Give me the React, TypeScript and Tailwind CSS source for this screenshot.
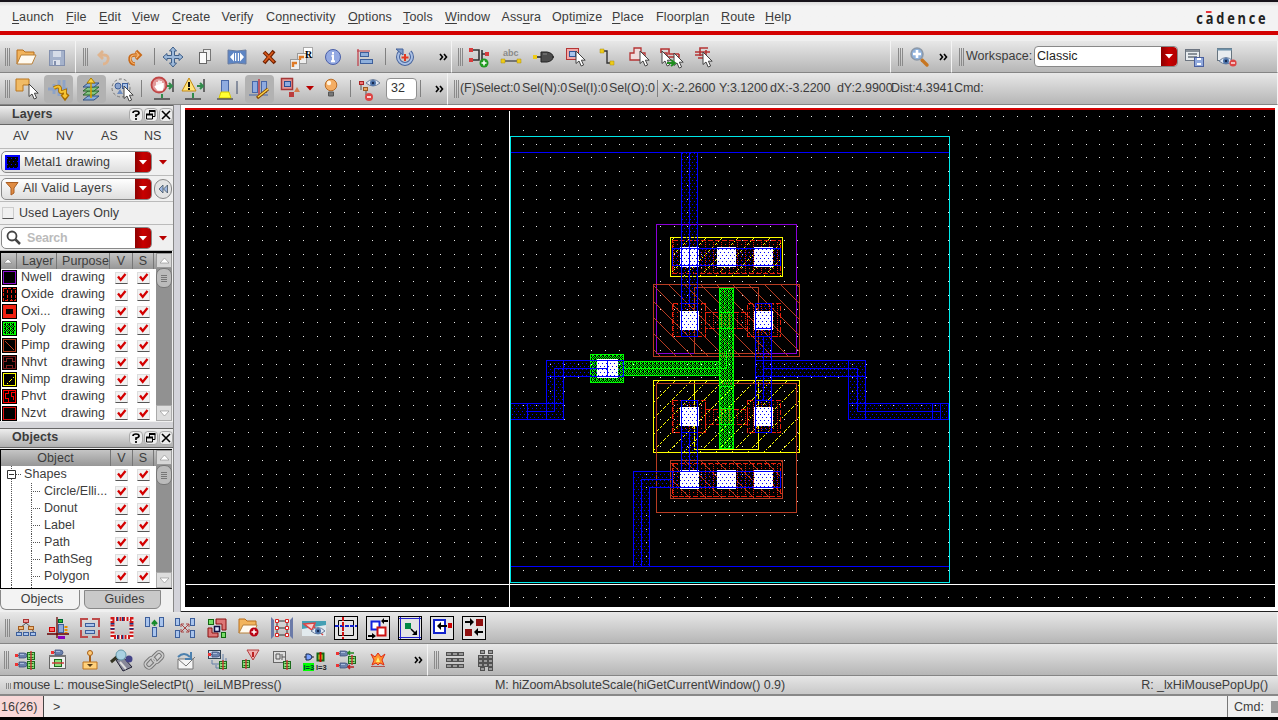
import React from "react";

type Kids = { children?: React.ReactNode };

const bar = "flex items-center bg-gradient-to-b from-[#e8e8e8] to-[#b6b6b6] border-b border-[#858585] border-r border-r-[#f4f4f4] shrink-0";

function Ic({ w = "w-8", on = false, children }: Kids & { w?: string; on?: boolean }) {
  return (
    <div className={`${w} shrink-0 flex items-center justify-center`}>
      <div className={on ? "w-[29px] h-[28px] rounded-[4px] bg-[#b2b2b2] flex items-center justify-center" : "flex"}>
        <svg width="28" height="28" viewBox="-14 -14 28 28" className="overflow-visible">{children}</svg>
      </div>
    </div>
  );
}

function Grip({ w = "w-[9px]", h = "h-[18px]" }: { w?: string; h?: string }) {
  return (
    <div className={`${w} flex justify-end shrink-0`}>
      <div className={`${h} w-[5px] border-l border-r border-[#8a8a8a] flex justify-center`}>
        <div className="w-px bg-[#8a8a8a]" />
      </div>
    </div>
  );
}

function Sep({ w = "w-[6px]" }: { w?: string }) {
  return (
    <div className={`${w} flex justify-center shrink-0`}>
      <div className="w-px h-[17px] bg-[#808080]" />
    </div>
  );
}

function More({ w }: { w: string }) {
  return (
    <div className={`${w} flex justify-center shrink-0`}>
      <svg width="9" height="8" viewBox="0 0 9 8" fill="none" stroke="#000" strokeWidth="1.6" className="shrink-0">
        <path d="M1 1l2.5 3L1 7M5 1l2.5 3L5 7" />
      </svg>
    </div>
  );
}

const Cursor = ({ x = 0, y = 0 }: { x?: number; y?: number }) => (
  <path transform={`translate(${x} ${y})`} d="M0 0V12.5L3 10L5.2 15L7.6 14L5.4 9.2H9.2Z" fill="#fff" stroke="#444" strokeWidth="1" />
);
const Box = ({ x, y, w, h, f = "#a9c4ec", s = "#3d5f9b", sw = 1 }: { x: number; y: number; w: number; h: number; f?: string; s?: string; sw?: number }) => (
  <rect x={x + 0.5} y={y + 0.5} width={w - 1} height={h - 1} fill={f} stroke={s} strokeWidth={sw} />
);
const Transistor = ({ x, y }: { x: number; y: number }) => (
  <g transform={`translate(${x} ${y})`}>
    <Box x={0} y={0} w={8} h={8} f="#8be07b" s="#1c6b1c" />
    <path d="M1.500 2.500h5M1.500 5.500h5" stroke="#1c6b1c" />
    <path d="M4-1V9" stroke="#c33" strokeWidth="1.4" />
  </g>
);
const Gate = ({ x, y }: { x: number; y: number }) => (
  <g transform={`translate(${x} ${y})`}>
    <path d="M-2 2.500H2" stroke="#555" />
    <path d="M1 0H6Q9 0 9 2.500T6 5H1Z" fill="#6c82ad" stroke="#40527d" strokeWidth=".8" />
    <path d="M2 1.500H6" stroke="#a9bbdc" />
    <rect x="-3" y="1" width="3" height="3" fill="#e33" />
  </g>
);
const Magnifier = ({ plus = false }: { plus?: boolean }) => (
  <g>
    <path d="M3 3L8 8" stroke="#c77622" strokeWidth="3.4" strokeLinecap="round" />
    <circle cx="-2" cy="-3" r="6" fill="#8fb2dc" stroke="#8d99a8" strokeWidth="1.6" />
    {plus && <path d="M-2-7V1M-6-3H2" stroke="#fff" strokeWidth="2.6" />}
  </g>
);
const Eye = ({ x = 0, y = 0 }: { x?: number; y?: number }) => (
  <g transform={`translate(${x} ${y})`}>
    <path d="M-7 0Q0-7 7 0Q0 6 -7 0Z" fill="#dfe7f2" stroke="#6c7f9c" />
    <circle r="3" fill="#4d73aa" />
    <circle r="1.2" fill="#14264d" />
  </g>
);

const menus: [string, number][] = [
  ["Launch", 0], ["File", 0], ["Edit", 0], ["View", 0], ["Create", 0], ["Verify", 3], ["Connectivity", 2], ["Options", 0], ["Tools", 0],
  ["Window", 0], ["Assura", 3], ["Optimize", 4], ["Place", 0], ["Floorplan", 7], ["Route", 0], ["Help", 0],
];
const menuW = [
  "w-[54px]", "w-[33px]", "w-[33px]", "w-[40px]", "w-[49.5px]", "w-[44.5px]", "w-[82px]", "w-[55px]", "w-[42px]",
  "w-[56.5px]", "w-[50.5px]", "w-[60px]", "w-[44px]", "w-[65px]", "w-[44px]", "w-[40px]",
];

function MenuBar() {
  return (
    <div className="h-[35px] shrink-0 border-t-2 border-[#17131a] bg-[#f2f2f2] flex flex-col">
      <div className="flex-1 flex items-center pt-px pl-3 pr-[12px] tracking-[0.12px] bg-gradient-to-b from-[#dcdcdc] via-[#f3f3f3] via-15% to-[#f3f3f3]">
        {menus.map(([m, u], i) => (
          <div key={m} className={`${menuW[i]} shrink-0`}>
            {m.slice(0, u)}<span className="underline underline-offset-2">{m[u]}</span>{m.slice(u + 1)}
          </div>
        ))}
        <div className="ml-auto flex flex-col items-end mt-[2px] font-['Open_Sans','Noto_Sans',sans-serif] font-bold text-[16px] leading-4 text-[#222]">
          <div className="flex origin-right scale-x-[0.8] tracking-[3.5px]">
            <span>c</span>
            <span className="relative">a<i className="absolute left-0 top-[1px] w-[7px] h-[2px] bg-[#e8323c]" /></span>
            <span className="-mr-[3.5px]">dence</span>
          </div>
        </div>
      </div>
      <div className="h-1 bg-[#d30000]" />
    </div>
  );
}

function RedArrow({ h = "h-full" }: { h?: string }) {
  return (
    <div className={`w-4 ${h} bg-gradient-to-r from-[#8d0000] via-[#c80000] to-[#b00000] flex items-center justify-center rounded-r-[4px]`}>
      <svg width="8" height="5"><path d="M0 0H8L4 4.5Z" fill="#fff" /></svg>
    </div>
  );
}

function TopBars() {
  return (
    <div className="shrink-0 pt-[6px] bg-[#efefef] flex flex-col">
      <div className="flex h-8">
        <div className={`${bar} w-[76px]`}>
          <Grip w="w-[10px]" />
          <Ic w="w-[31px]">
            <path d="M-9 7V-7h6l2 2h9v4" fill="#f2b45c" stroke="#b86e1c" />
            <path d="M-9 7L-5-2H10L6 7Z" fill="#fffaf0" stroke="#b9813a" />
          </Ic>
          <Ic>
            <Box x={-8} y={-7} w={16} h={16} f="#a5b2cb" s="#8390ae" />
            <rect x="-4" y="-6" width="8" height="6" fill="#d6dce8" /><rect x="-4" y="3" width="7" height="5" fill="#dce1eb" /><rect x="-3" y="4" width="2" height="4" fill="#8390ae" />
          </Ic>
        </div>
        <div className={`${bar} w-[376px]`}>
          <Grip w="w-[12px]" />
          <Ic w="w-[31px]"><path d="M-5-2H0Q5-2 4 3Q3 7-1 7M-1-6L-5-2L-1 2" fill="none" stroke="#dfb48e" strokeWidth="2.8" /></Ic>
          <Ic><path d="M5-2H0Q-6-2-5 3Q-4 7 0 7M1-6L5-2L1 2" fill="none" stroke="#c96a1a" strokeWidth="3.400" /><path d="M4-2H0Q-5-2-4.500 3Q-4 6 0 7M1-5L4-2L1 1" fill="none" stroke="#f6b673" strokeWidth="1.200" /></Ic>
          <Sep />
          <Ic><path d="M0-10l3.500 4H1.500v4.500H6V-3.500L10 0L6 3.500V1.500H1.500V6H3.500L0 10L-3.500 6H-1.500V1.500H-6V3.500L-10 0L-6-3.500V-1.500H-1.500V-6H-3.500Z" fill="#9db9da" stroke="#3f5f88" /></Ic>
          <Ic><Box x={-2} y={-8} w={8} h={12} f="#eee" s="#777" /><Box x={-6} y={-5} w={8} h={12} f="#fafafa" s="#666" /></Ic>
          <Ic><path d="M-9-7Q0-5 9-7V7Q0 5-9 7Z" fill="#5d85c4" stroke="#6a7da0" /><path d="M-3-4.500L-7 0L-3 4.500ZM3-4.500L7 0L3 4.500Z" fill="#fff" /><rect x="-2" y="-4" width="1.200" height="8" fill="#fff" /><rect x=".8" y="-4" width="1.200" height="8" fill="#fff" /></Ic>
          <Ic><path d="M-5-5L6 6M5-6L-5 6" stroke="#722200" strokeWidth="3.800" /><path d="M-4.500-4.500L5 5M4-5L-4.500 5" stroke="#dc5a1c" strokeWidth="1.600" /></Ic>
          <Ic>
            <Box x={2} y={-10} w={10} h={11} f="#fff" s="#aaa" /><Box x={-4} y={-4} w={10} h={11} f="#eee" s="#999" /><Box x={-11} y={2} w={10} h={11} f="#eee" s="#999" />
            <path d="M-8 10V6H-4M-1 3V0H3" stroke="#df7a26" strokeWidth="2.400" fill="none" />
            <text x="4" y="1" fontSize="10" fontWeight="bold" fill="#000" fontFamily="Liberation Serif" letterSpacing="0">R</text>
          </Ic>
          <Ic><circle r="7.500" fill="#93a9e2" stroke="#4a5fa8" /><path d="M0-5V-2.500M-1.500-1H0V4M-2 4.300H2" stroke="#fff" strokeWidth="2" fill="none" /></Ic>
          <Ic><path d="M-7-8V9M-8-6H5" stroke="#c03a45" strokeWidth="1.200" /><Box x={-5} y={-5} w={9} h={5} f="#8fb0dc" /><Box x={-5} y={2} w={13} h={5} f="#8fb0dc" /></Ic>
          <Sep w="w-[8px]" />
          <Ic><path d="M-5-5A7 7 0 1 0 5-5" fill="none" stroke="#45629b" strokeWidth="4" /><path d="M-5-5A7 7 0 1 0 5-5" fill="none" stroke="#a9bfe4" strokeWidth="2" /><path d="M-9-8H-2V-2Z" fill="#7f9cca" stroke="#45629b" /><path d="M0-3V4M-3.500 .5H3.500" stroke="#e33a22" strokeWidth="2" /></Ic>
          <More w="w-[44px]" />
        </div>
        <div className={`${bar} w-[439px]`}>
          <Grip w="w-[11px]" />
          <Ic>
            <path d="M-6-7H0V3H-6M3-7V3M3-3H9" stroke="#333" strokeWidth="1.600" fill="none" />
            <path d="M-10-9h4v4h-4ZM-10 1h4v4h-4ZM6-5h4v4H6Z" fill="#d83c3c" /><circle cx="5" cy="6" r="4.500" fill="#1f9a1f" /><path d="M5 3.500V8.500M2.500 6H7.500" stroke="#fff" strokeWidth="1.500" />
          </Ic>
          <Ic><text x="-8" y="-1" fontSize="9" fontWeight="bold" fill="#8a8a8a" letterSpacing="0">abc</text><path d="M-8 4H8" stroke="#222" /><path d="M-10 2h4v4h-4ZM6 2h4v4H6Z" fill="#eecb18" stroke="#a98e12" strokeWidth=".5" /></Ic>
          <Ic><path d="M-9 0H0M8 0H11" stroke="#222" strokeWidth="1.400" /><path d="M-2-5H4Q10-4 10 0T4 5H-2Z" fill="#4c4c4c" stroke="#222" /><path d="M0-3H4" stroke="#888" /><rect x="-10" y="-2" width="4" height="4" fill="#eecb18" /></Ic>
          <Ic><Box x={-9} y={-9} w={13} h={12} f="#f0a9a9" s="#b53434" /><Box x={-6} y={-6} w={7} h={6} f="#a9c4ec" s="#31579a" /><Cursor x={1} y={-6} /></Ic>
          <Ic><path d="M-4-6H0V6H5" stroke="#333" strokeWidth="1.400" fill="none" /><path d="M-7-8h4v4h-4ZM3 4h4v4H3Z" fill="#eecb18" stroke="#a98e12" strokeWidth=".5" /></Ic>
          <Ic><path d="M-9 3V-4H-5V-9H2V-4H6V3Z" fill="#efdddd" stroke="#b53434" strokeWidth="1.300" /><Cursor x={1} y={-6} /></Ic>
          <Ic><path d="M-10-4V-8H-2V-3H8M-8-4H-4V0H8V-3" stroke="#b53434" strokeWidth="1.600" fill="none" /><Cursor x={-9} y={-6} /><Cursor x={3} y={-4} /><path d="M-4 6H3M0 3L4 6L0 9" stroke="#1e8d1e" strokeWidth="2" fill="none" /></Ic>
          <Ic><path d="M-8-5H-3V-9H5M-3-1V-5H7M-8-2H3V-7M-5 1H5" stroke="#b53434" strokeWidth="1.600" fill="none" /><Cursor x={0} y={-5} /></Ic>
        </div>
        <div className={`${bar} w-[61px]`}>
          <Grip w="w-[12px]" /><Ic><Magnifier plus /></Ic><More w="w-[17px]" />
        </div>
        <div className={`${bar} flex-1`}>
          <Grip w="w-[12px]" />
          <span className="pl-[2px] w-[70px] whitespace-nowrap">Workspace:</span>
          <div className="w-[144px] h-[21px] rounded-[4px] border border-[#888] bg-white flex items-center pl-[2px] text-[#222]">
            <span className="flex-1">Classic</span><RedArrow />
          </div>
          <Ic><Box x={-9} y={-8} w={15} h={12} f="#e8ecef" s="#6c7480" /><path d="M-9-6H6M-6-3H3M-6 0H3" stroke="#68717c" strokeWidth="1.300" /><Box x={0} y={0} w={10} h={10} f="#91a9dc" s="#4a5f9d" /><path d="M3 2H7M3 7H7" stroke="#fff" strokeWidth="2" /></Ic>
          <Ic><Box x={-9} y={-9} w={15} h={13} f="#e8ecef" s="#66737e" /><path d="M-9-7.500H6" stroke="#6d91a9" strokeWidth="2" /><Eye x={0} y={4} /><circle cx="7" cy="6" r="3.600" fill="#dc4545" /><path d="M5 6H9" stroke="#fff" strokeWidth="1.300" /></Ic>
        </div>
      </div>
      <div className="flex h-8">
        <div className={`${bar} w-[448px]`}>
          <Grip w="w-[10px]" />
          <Ic w="w-[31px]"><path d="M-10-10H3V-4H-3V2H-10Z" fill="#f0bb66" stroke="#b97620" /><Cursor x={3} y={-5} /></Ic>
          <Ic w="w-[34px]" on><path d="M-10 0H10M-4-5V5M1-9V7M6-9V4" stroke="#8da3c8" strokeWidth="3" /><path d="M-4-1Q3-5 2 2Q2 4 7 2V7M4 5L7 9L10 5" fill="none" stroke="#a76c00" strokeWidth="3.800" /><path d="M-4-1Q3-5 2 2Q2 4 7 2V7M5 6L7 8L9 6" fill="none" stroke="#f6c332" strokeWidth="2" /></Ic>
          <Ic on>
            <path d="M-8 11L-3 7H8L3 11Z" fill="#86abd9" stroke="#325383" /><path d="M-8 6L-3 2H8L3 6Z" fill="#83c583" stroke="#29652d" /><path d="M-8 2L-3-2H8L3 2Z" fill="#83c583" stroke="#29652d" /><path d="M-8-2L-3-6H8L3-2Z" fill="#86abd9" stroke="#325383" />
            <path d="M0 9V-7" stroke="#d8a100" strokeWidth="1.600" /><path d="M-4-6L0-11L4-6Z" fill="#ffd43d" stroke="#a77a00" />
          </Ic>
          <Ic w="w-[30px]"><circle cx="-1" cy="-1" r="9" fill="none" stroke="#777" strokeDasharray="3 2" /><circle cx="-4" cy="-3" r="3" fill="#8ba4cf" stroke="#405f95" /><Box x={0} y={-6} w={6} h={6} /><path d="M-5 5L-2 0L1 5Z" fill="#6d8cc0" /><Cursor x={2} y={-3} /></Ic>
          <Sep w="w-[9px]" />
          <Ic w="w-[31px]"><circle cx="-3" cy="-4" r="7.500" fill="#e29a9a" stroke="#c04646" strokeWidth="1.800" /><path d="M-7-3L-4 1H0L1-2V-6M-5 0V-7M-3 0V-8.500M-1 0V-8" stroke="#fff" strokeWidth="1.600" fill="#fff" /><path d="M11-10V3M-8 10H8" stroke="#444" strokeWidth="1.500" /><path d="M5-3H9M7-6L10-3L7 0M0 9V5" stroke="#318b4b" strokeWidth="2" fill="none" /></Ic>
          <Ic><path d="M-11 2L-4-11L3 2Z" fill="#ffe47a" stroke="#c58a14" /><path d="M-4-7V-2M-4-1V1" stroke="#111" strokeWidth="2" /><path d="M11-10V3M-8 10H8" stroke="#444" strokeWidth="1.500" /><path d="M4-3H9M7-6L10-3L7 0M0 9V4" stroke="#318b4b" strokeWidth="2" fill="none" /></Ic>
          <Ic w="w-[33px]"><Box x={-5} y={-9} w={8} h={13} f="#8eabe0" s="#4767a7" /><path d="M-5 3H3L5 9H-7Z" fill="#ff3" stroke="#d8ca00" /><path d="M-9 10H7" stroke="#222" /><path d="M11-8V5" stroke="#3b4868" /></Ic>
          <Ic w="w-[34px]" on><Box x={-7} y={-8} w={6} h={12} f="#8eabe0" s="#4767a7" /><Box x={2} y={-8} w={6} h={12} f="#8eabe0" s="#4767a7" /><path d="M-10 6H9" stroke="#4767a7" /><path d="M0-10V8" stroke="#bd3b4a" strokeWidth="1.500" /><path d="M9 0L-2 9" stroke="#8a4d00" strokeWidth="3.200" /><path d="M9 0L-1 8" stroke="#ffd84a" strokeWidth="1.500" /></Ic>
          <Ic w="w-[28px]"><Box x={-9} y={-11} w={12} h={12} f="#e39b9b" s="#a43737" sw={1.5} /><Box x={-6} y={-8} w={7} h={6} f="#8eabe0" s="#274e92" /><path d="M-1 3H4V8H-1Z" fill="#bb3c3c" /><path d="M4 3L7-2L10 3Z" fill="#d37b49" /></Ic>
          <div className="w-[11px] flex justify-center shrink-0"><svg width="8" height="5"><path d="M0 0H8L4 4.500Z" fill="#b80000" /></svg></div>
          <Ic><circle cx="0" cy="-4" r="5.800" fill="#f4ad63" stroke="#b96c26" /><circle cx="-2" cy="-6" r="2.200" fill="#fff1dc" /><path d="M-2.500 3H2.500V7H-2.500Z" fill="#777" stroke="#555" /></Ic>
          <Sep />
          <Ic><Box x={-10} y={-8} w={5} h={4} f="#e77" s="#a22" /><Box x={-6} y={-2} w={5} h={4} f="#eca35e" s="#9b5c22" /><path d="M-8-4V1M-3 2V6H0" stroke="#555" fill="none" /><Eye x={4} y={-6} /><circle cx="0" cy="8" r="4" fill="#dc4545" /><path d="M-2 8H2" stroke="#fff" strokeWidth="1.500" /></Ic>
          <div className="w-[31px] h-[22px] ml-px shrink-0 rounded-[4px] border border-[#909090] bg-white pl-1 flex items-center text-[#333]">32</div>
          <Sep /><More w="w-[24px] pl-[8px]" />
        </div>
        <div className={`${bar} flex-1 whitespace-nowrap tracking-[-0.08px]`}>
          <Grip w="w-[11px]" />
          <span className="w-[63px] pl-px">(F)Select:0</span><span className="w-[46px]">Sel(N):0</span><span className="w-[41px]">Sel(I):0</span><span className="w-[46px]">Sel(O):0</span>
          <Sep w="w-[4px]" />
          <span className="w-[60px] pl-[3px]">X:-2.2600</span><span className="w-[51px]">Y:3.1200</span><span className="w-[67px]">dX:-3.2200</span><span className="w-[54px]">dY:2.9900</span><span className="w-[63px]">Dist:4.3941</span><span>Cmd:</span>
        </div>
      </div>
    </div>
  );
}

function PanelHead({ title }: { title: string }) {
  const b = "w-[14px] h-[14px] rounded-[4px] border border-[#a9a9a9] bg-[#ececec] flex items-center justify-center";
  return (
    <div className="h-5 flex items-center shrink-0 pl-3 gap-[1px] pb-px border-y border-[#666] bg-gradient-to-b from-[#eee] to-[#b0b0b0]">
      <span className="font-bold flex-1">{title}</span>
      <div className={b}><svg width="8" height="10" fill="none" stroke="#000" strokeWidth="1.700"><path d="M1 3Q1 1 4 1T7 3Q7 4.500 4 5V7M4 8V10" /></svg></div>
      <div className={b}><svg width="10" height="10" fill="none" stroke="#000"><path d="M3.500 4V1.500H9V6.500H7M.500 4.500H6.500V9H.500Z" /><path d="M3 1H9.500M0 4.500H7" strokeWidth="2" /></svg></div>
      <div className={b}><svg width="10" height="10" stroke="#000" strokeWidth="1.600"><path d="M1 1L9 9M9 1L1 9" /></svg></div>
    </div>
  );
}

const Check = () => (
  <div className="w-[13px] h-[12px] bg-[#f2f2f2] border border-[#ddd] border-b-[#555] flex items-center justify-center">
    <svg width="10" height="9"><path d="M1 3.500L3.700 7L8.500 1" stroke="#d40000" strokeWidth="2.300" fill="none" /></svg>
  </div>
);

function Scroll() {
  return (
    <div className="w-4 shrink-0 bg-[#919191] flex flex-col items-center justify-between">
      <div className="w-4">
        <div className="h-[15px] bg-[#d6d6d6] border border-[#999] flex items-center justify-center"><svg width="9" height="7"><path d="M0 6L4.500 1L9 6Z" fill="#fff" stroke="#888" strokeWidth=".6" /></svg></div>
        <div className="h-[20px] rounded-[7px] border border-[#777] bg-[#bbb] flex flex-col items-center justify-center gap-px">
          <i className="w-[6px] h-px bg-[#777]" /><i className="w-[6px] h-px bg-[#777]" /><i className="w-[6px] h-px bg-[#777]" /><i className="w-[6px] h-px bg-[#777]" />
        </div>
      </div>
      <div className="h-4 w-4 bg-[#ddd] border border-[#aaa] flex items-center justify-center"><svg width="9" height="7"><path d="M0 1L4.500 6L9 1Z" fill="#fff" stroke="#888" strokeWidth=".6" /></svg></div>
    </div>
  );
}

const layers: [string, React.ReactNode][] = [
  ["Nwell", <rect x="1.500" y="1.500" width="12" height="12" stroke="#8a10d0" />],
  ["Oxide", <path d="M1.500 1.500H13.500V13.500H1.500ZM5.500 3V13M9.500 3V13" stroke="#f02010" strokeDasharray="3 1.500" />],
  ["Oxi...", <g><rect x="1" y="1" width="13" height="13" fill="#f02010" /><path d="M4 5H11V10H4Z" fill="#000" /></g>],
  ["Poly", <rect transform="translate(.5 .5)" x="1" y="1" width="12" height="12" fill="url(#poly)" stroke="#0f0" />],
  ["Pimp", <path d="M1.500 1.500H13.500V13.500H1.500ZM3 3L12 12" stroke="#b84020" />],
  ["Nhvt", <path d="M1.500 1.500H13.500V13.500H1.500ZM1 6.500H4.500V3.500H10.500V6.500H13M4.500 13V10.500H10.500V13" stroke="#802020" />],
  ["Nimp", <g><rect x="1.500" y="1.500" width="12" height="12" stroke="#ff0" /><path d="M5 11h1v1h-1zM7 9h1v1h-1zM9 7h1v1h-1zM11 5h1v1h-1zM8 8h1v1h-1z" fill="#ff0" /></g>],
  ["Phvt", <path d="M1.500 1.500H13.500V13.500H1.500ZM6.500 1V4.500H3.500V9.500H6.500V13M9.500 3.500H13M9.500 3V7.500H11.500V11" stroke="#f00" />],
  ["Nzvt", <rect x="1.500" y="1.500" width="12" height="12" stroke="#e01010" />],
];

const th = "h-full flex items-center border-r border-[#777] shrink-0";

function Side() {
  return (
    <div className="w-[174px] shrink-0 flex flex-col bg-[#f0f0f0] border-r border-[#888] overflow-hidden">
      <PanelHead title="Layers" />
      <div className="h-6 flex items-center pl-[13px] border-b border-[#bbb] shrink-0">
        <span className="w-[43px]">AV</span><span className="w-[45px]">NV</span><span className="w-[43px]">AS</span><span>NS</span>
      </div>
      <div className="h-[27px] flex items-center pl-px border-b border-[#bbb] shrink-0">
        <div className="w-[151px] h-[22px] rounded-[5px] border border-[#888] bg-gradient-to-b from-white to-[#dedede] flex items-center pl-[3px] tracking-[0.1px]">
          <svg width="15" height="15" className="mr-[4px]" shapeRendering="crispEdges"><rect width="15" height="15" fill="#000" /><rect transform="translate(.5 .5)" x=".5" y=".5" width="13" height="13" fill="url(#metal)" stroke="#00f" strokeWidth="2" /></svg>
          <span className="flex-1 whitespace-nowrap">Metal1 drawing</span><RedArrow />
        </div>
        <svg width="8" height="5" className="ml-[7px]"><path d="M0 0H8L4 4.500Z" fill="#b80000" /></svg>
      </div>
      <div className="h-[26px] flex items-center pl-px border-b border-[#bbb] shrink-0">
        <div className="w-[151px] h-[22px] rounded-[5px] border border-[#888] bg-gradient-to-b from-white to-[#dedede] flex items-center pl-[3px] tracking-[0.25px]">
          <svg width="15" height="15" className="mr-[3px]"><path d="M1 1.500H13L9 7V12L6 14V7Z" fill="#df8b42" stroke="#a95d22" /></svg>
          <span className="flex-1 whitespace-nowrap">All Valid Layers</span><RedArrow />
        </div>
        <div className="ml-[2px] w-[18px] h-5 rounded-full border border-[#888] bg-[#e4e4e4] flex items-center justify-center"><svg width="10" height="10"><path d="M5 1V9L1 5ZM9.500 1V9L5.500 5Z" fill="#9fb6df" stroke="#456" strokeWidth=".8" /></svg></div>
      </div>
      <div className="h-[23px] flex items-center pl-[2px] border-b border-[#bbb] shrink-0">
        <div className="w-3 h-3 bg-[#f0f0f0] border border-[#ccc] border-b-[#555] mr-[5px]" /><span>Used Layers Only</span>
      </div>
      <div className="h-[26px] flex items-center pt-px pl-px border-b border-[#bbb] shrink-0">
        <div className="w-[151px] h-[22px] rounded-[5px] border border-[#888] bg-white flex items-center pl-[4px]">
          <svg width="16" height="16" className="mr-[5px]"><circle cx="6" cy="6" r="4.500" fill="none" stroke="#444" strokeWidth="1.800" /><path d="M9.500 9.500L14 14" stroke="#444" strokeWidth="2.500" /></svg>
          <span className="flex-1 text-[#bbb] font-bold tracking-[-0.2px]">Search</span><RedArrow />
        </div>
        <svg width="8" height="5" className="ml-[7px]"><path d="M0 0H8L4 4.500Z" fill="#b80000" /></svg>
      </div>
      <div className="h-[170px] mr-px shrink-0 border-t-2 border-l border-black flex bg-white">
        <div className="flex-1 overflow-hidden">
          <div className="h-4 bg-gradient-to-b from-[#c5c5c5] to-[#979797] flex items-center">
            <div className={`${th} w-4 justify-center`}><svg width="9" height="6"><path d="M0 5L4 1L8 5Z" fill="#fff" stroke="#777" strokeWidth=".5" /></svg></div>
            <div className={`${th} w-[40px] pl-[5px]`}>Layer</div><div className={`${th} w-[53px] pl-[5px]`}>Purpose</div>
            <div className={`${th} w-[23px] justify-center`}>V</div><div className={`${th} w-[21px] justify-center`}>S</div>
          </div>
          {layers.map(([n, d]) => (
            <div key={n} className="h-[17px] flex items-center pl-px">
              <svg width="15" height="15" className="mr-1 shrink-0" shapeRendering="crispEdges"><rect width="15" height="15" fill="#000" /><g fill="none">{d}</g></svg>
              <span className="w-[40px]">{n}</span><span className="w-[54px]">drawing</span>
              <div className="w-[22px] flex"><Check /></div><Check />
            </div>
          ))}
        </div>
        <Scroll />
      </div>
      <div className="h-[6px] mt-px bg-[#d4d4d8] shrink-0" />
      <PanelHead title="Objects" />
      <div className="h-[140px] mt-px mr-px shrink-0 border-t border-l border-black border-b flex bg-white">
        <div className="flex-1 overflow-hidden">
          <div className="h-4 bg-gradient-to-b from-[#c5c5c5] to-[#979797] flex items-center">
            <div className={`${th} w-[110px] justify-center`}>Object</div>
            <div className={`${th} w-[22px] justify-center`}>V</div><div className={`${th} w-[21px] justify-center`}>S</div>
          </div>
          {["Shapes", "Circle/Elli...", "Donut", "Label", "Path", "PathSeg", "Polygon", ""].map((n, i) => (
            <div key={n} className="h-[17px] flex items-center">
              <svg width={i ? 43 : 23} height="17" fill="none" stroke="#555" className="shrink-0">
                {i ? <path d="M10.500 0V17M30.500 0V17M30 8.500H40" strokeDasharray="1 1" /> : <><path d="M10.500 0V4M10.500 13V17M15 8.500H20" strokeDasharray="1 1" /><path d="M6.500 4.500H14.500V12.500H6.500ZM8 8.500H13" stroke="#333" /></>}
              </svg>
              <span className={i ? "w-[71px] whitespace-nowrap" : "w-[91px]"}>{n}</span>
              <div className="w-[22px] flex"><Check /></div><Check />
            </div>
          ))}
        </div>
        <Scroll />
      </div>
      <div className="flex items-start flex-1 gap-1 pt-px">
        <div className="w-20 h-[20px] rounded-b-[6px] border border-t-0 border-[#888] bg-[#f3f3f3] flex items-center justify-center pl-1">Objects</div>
        <div className="w-[77px] h-[19px] rounded-b-[6px] border border-[#888] bg-[#c9c9c9] flex items-center justify-center pl-1">Guides</div>
      </div>
    </div>
  );
}

const R = ({ b, s, f = "none", d }: { b: [number, number, number, number]; s?: string; f?: string; d?: string }) => (
  <rect x={b[0]} y={b[1]} width={b[2] - b[0]} height={b[3] - b[1]} stroke={s} fill={f} strokeDasharray={d} />
);

function Layout() {
  const dots: string[] = [];
  for (let i = -23; i <= 55; i++)
    for (let j = -34; j <= 1; j++) dots.push(`M${Math.floor(509.450 + i * 13.730)} ${Math.floor(584.150 + j * 13.750)}h1v1h-1z`);
  const metal = "url(#metal)", red = "#e8200c", brown = "#b83c22", align = "translate(-.5 -.5)";
  const contacts: [number, number, number, number][] = [];
  for (const x of [680, 717, 754]) contacts.push([x, 247, x + 19, 267], [x, 470, x + 19, 489]);
  for (const x of [680, 754]) contacts.push([x, 311, x + 19, 330], [x, 407, x + 19, 426]);
  contacts.push([597, 359, 618, 378]);
  return (
    <svg width="1090" height="497" viewBox="185 110 1090 497" shapeRendering="crispEdges" className="block">
      <defs>
        <pattern id="metal" width="4" height="6" patternUnits="userSpaceOnUse" patternTransform={align}><path d="M0 0h1v1h-1zM2 3h1v1h-1z" fill="#00f" /></pattern>
        <pattern id="poly" width="4" height="4" patternUnits="userSpaceOnUse" patternTransform={align}><path d="M0 0h1v1h-1zM2 0h1v1h-1zM1 1h1v1h-1zM3 1h1v1h-1zM0 2h1v1h-1zM2 2h1v1h-1zM0 3h2v1h-2z" fill="#0f0" /></pattern>
        <pattern id="pimp" width="16" height="16" patternUnits="userSpaceOnUse" patternTransform={align}><path d={Array.from({ length: 16 }, (_, k) => `M${k} ${k}h1v1h-1z`).join("")} fill={brown} /></pattern>
        <pattern id="nimp" width="16" height="16" patternUnits="userSpaceOnUse" patternTransform={align}><path d={[0, 1, 2, 4, 5, 7, 8, 9, 11, 12, 14].map((k) => `M${k} ${15 - k}h1v1h-1z`).join("")} fill="#ff0" /></pattern>
        <pattern id="oxide" width="8" height="4" patternUnits="userSpaceOnUse" patternTransform={align}><path d="M1 0h1v1h-1zM5 0h1v1h-1zM1 2h1v1h-1z" fill={red} /></pattern>
      </defs>
      <rect x="185" y="110" width="1090" height="497" fill="#000" />
      <path d={dots.join("")} fill="#e8e8e8" />
      <g transform="translate(.5 .5)" fill="none" strokeWidth="1">
        <R b={[656, 224, 796, 353]} s="#8a00d8" />
        <R b={[670, 237, 782, 276]} s="#ff0" f="url(#nimp)" />
        <R b={[653, 284, 799, 356]} s={brown} f="url(#pimp)" />
        <R b={[694, 287, 758, 353]} s={brown} />
        <R b={[653, 380, 799, 452]} s="#ff0" f="url(#nimp)" />
        <path d="M694 380V449H758V380" stroke="#ff0" />
        <R b={[656, 383, 796, 512]} s={brown} />
        <R b={[670, 460, 782, 498]} s={brown} f="url(#pimp)" />
        <R b={[672, 240, 780, 273]} s={red} f="url(#oxide)" d="5 2" />
        <R b={[672, 463, 780, 496]} s={red} f="url(#oxide)" d="5 2" />
        {[[303, 336], [400, 432]].map(([a, z]) => (
          <g key={a}>
            <R b={[672, a, 705, z]} s={red} f="url(#oxide)" d="5 2" />
            <R b={[747, a, 780, z]} s={red} f="url(#oxide)" d="5 2" />
            <R b={[705, a + 9, 747, z - 8]} s={red} f="url(#oxide)" d="5 2" />
          </g>
        ))}
        <R b={[719, 288, 733, 448]} s="#0f0" f="url(#poly)" />
        <R b={[623, 361, 719, 375]} s="#0f0" f="url(#poly)" />
        <path d="M623 368H726V350M719 312H733M719 328H733M719 386H733M719 408H733M719 424H733" stroke="#0f0" />
        <R b={[590, 354, 623, 382]} s="#0f0" f="url(#poly)" />
        <path d="M597 359H617V377H597Z" fill="#000" />
      </g>
      {contacts.map((c) => <R key={c.join()} b={c} f="#fff" />)}
      <g transform="translate(.5 .5)" fill={metal} stroke="#00f">
        <path d="M681 152H697V336H681Z" /><path d="M689 152V303M681 303H697" />
        <R b={[672, 248, 780, 265]} s="#00f" f={contacts.length ? metal : "none"} />
        <path d="M755 303H771V432H755Z" /><path d="M755 336H771M763 336V400M755 400H771M755 328H771" />
        <path d="M681 400H697V471H681Z" /><path d="M681 432H697M689 432V471" />
        <path d="M633 566V471H780V487H649V566" /><path d="M641 566V479H672V471V487" fill="none" />
        <path d="M546 403V360H623V376H563V419H510V403Z" />
        <path d="M546 376H563V360M546 403H563M546 403V419M527 403V419M527 411H554V368H607M607 360V376" fill="none" />
        <path d="M755 360H865V403H948V419H848V376H755Z" />
        <path d="M763 376V368H857V411H940M848 360V376H865M848 403H865V419M932 403V419M940 403V419" fill="none" />
        <path d="M510 152H949M510 566H949" fill="none" />
        <path d="M510 136H949V582H510Z" fill="none" stroke="#00e8e8" />
        <path d="M509 110V607M185 584H1275" fill="none" stroke="#fff" />
      </g>
    </svg>
  );
}

const black = (k: React.ReactNode) => (<><Box x={-12} y={-12} w={24} h={24} f="#e3e3e3" s="#000" />{k}</>);

function BottomBars() {
  return (
    <div className="shrink-0 flex flex-col">
      <div className={`${bar} h-8`}>
        <Grip w="w-[10px]" />
        <Ic><path d="M0-5L-6 0M0-5L6 0M-6 1L-8 5M6 1L8 5" stroke="#555" /><Box x={-3} y={-9} w={6} h={4} f="#f19999" s="#a33" /><Box x={-8} y={-2} w={6} h={4} f="#efb775" s="#a35d22" /><Box x={2} y={-2} w={6} h={4} f="#efb775" s="#a35d22" /><Box x={-10} y={4} w={6} h={4} /><Box x={-3} y={4} w={6} h={4} /><Box x={4} y={4} w={6} h={4} /></Ic>
        <Ic><path d="M-11 6H11M-1-11V10" stroke="#600" strokeWidth="1.300" /><Box x={-9} y={-1} w={6} h={5} f="#f66" s="#c00" /><Box x={0} y={-9} w={5} h={4} f="#3b3" s="#063" /><Box x={0} y={-4} w={6} h={9} f="#8eabe0" /><path d="M8-2V5" stroke="#e58b00" strokeWidth="3" strokeDasharray="2 1" /><path d="M0 8H7V11H0Z" fill="#80b" /></Ic>
        <Ic><path d="M-9-1V-9H-2M2-9H9V-1M9 2V9H2M-2 9H-9V2" fill="none" stroke="#bd4b4b" strokeWidth="2" /><Box x={-5} y={-5} w={10} h={4} /><Box x={-5} y={2} w={10} h={4} /></Ic>
        <Ic><g fill="none" strokeWidth="4"><rect x="-9.500" y="-9" width="19" height="18" stroke="#f3f3f3" /><rect x="-9.500" y="-9" width="19" height="18" stroke="#d11818" strokeDasharray="2 1.500" /><path d="M-9.500-5V5M9.500-5V5M-5-9H5M-5 9H5" stroke="#22307a" strokeDasharray="1.500 3.500" /></g></Ic>
        <Ic w="w-[31px]"><Box x={-9} y={-11} w={5} h={10} /><Box x={5} y={-11} w={5} h={10} /><Box x={-2} y={-1} w={5} h={10} /><path d="M.500-2V-7M-2-4L.500-7L3-4" stroke="#188b2b" strokeWidth="2" fill="none" /></Ic>
        <Ic><Box x={-10} y={-10} w={5} h={8} /><Box x={5} y={-10} w={5} h={8} /><Box x={-10} y={2} w={5} h={8} /><Box x={5} y={2} w={5} h={8} /><path d="M-4-4L4 4M4-4L-4 4M-4-1V-4H-1M1-4H4V-1M4 1V4H1M-1 4H-4V1" stroke="#a44" fill="none" /></Ic>
        <Ic><Box x={-9} y={-9} w={6} h={6} f="#7d6" s="#161" /><Box x={4} y={4} w={5} h={6} f="#7d6" s="#161" /><path d="M-1-9H9V2H5V-4H-1ZM-9 0H-5V5H1V9H-9Z" fill="#d77" stroke="#811" /><Box x={-3} y={-2} w={6} h={6} f="#dce5ff" s="#114" sw={1.500} /></Ic>
        <Ic><path d="M-10 5V-9h6l2 2h9v4" fill="#f2b45c" stroke="#b86e1c" /><path d="M-10 5L-6-3H8L5 5Z" fill="#fffaf0" stroke="#b9813a" /><circle cx="5" cy="4" r="4.500" fill="#b80012" /><path d="M5 1.500V6.500M2.500 4H7.500" stroke="#fff" strokeWidth="1.500" /></Ic>
        <Ic w="w-[33px]"><path d="M-11-11L-8-8V8L-11 11ZM11-11L8-8V8L11 11Z" fill="#6b7aa8" /><path d="M-5-7H5M-5 0H5M-5 7H5M-5-9V9M5-9V9" stroke="#333" /><path d="M-6.500-8.500h3v3h-3ZM3.500-8.500h3v3h-3ZM-6.500-1.500h3v3h-3ZM3.500-1.500h3v3h-3ZM-6.500 5.500h3v3h-3ZM3.500 5.500h3v3h-3Z" fill="#fff" stroke="#d22" /></Ic>
        <Ic><rect x="-12" y="-7" width="24" height="15" fill="#e2eaee" /><path d="M-12-7H12V-3L-12 1Z" fill="#45a0b4" /><path d="M-10-4L1-5L-2 2ZM-1-2L9 7" stroke="#d44" strokeWidth="1.500" fill="#f7cfcf" /><Eye x={4} y={3} /></Ic>
        <Ic>{black(<><path d="M-7.500-7.500H7.500V7.500H-7.500Z" fill="none" stroke="#000" /><path d="M-11-2H11" stroke="#12c" strokeWidth="2" strokeDasharray="4 1" /><path d="M-3-11V11" stroke="#c11" strokeWidth="2" strokeDasharray="4 1" /></>)}</Ic>
        <Ic>{black(<><Box x={-7} y={-7} w={9} h={9} f="#fff" s="#12d" sw={2} /><Box x={-1} y={-1} w={9} h={9} f="#fff" s="#c11" sw={2} /><path d="M10-7H5M-10 8H-5" stroke="#000" strokeWidth="2" /><path d="M6-10V-4L3-7ZM-6 5V11L-2 8Z" fill="#000" /></>)}</Ic>
        <Ic>{black(<><path d="M-11-9.500H11M-9.500-11V11M9.500-11V11M-11 9.500H11" stroke="#22c" /><path d="M-5-5H1V1H-5Z" fill="#084" /><path d="M1 1L6 6" stroke="#000" strokeWidth="1.500" /><path d="M7 2V7H2Z" fill="#000" /></>)}</Ic>
        <Ic>{black(<><path d="M-8-8H3V5H-8Z" fill="#fff" stroke="#12c" strokeWidth="2" /><path d="M-3-2H5" stroke="#000" strokeWidth="2" /><path d="M-1-6V2L-5-2Z" fill="#000" /><path d="M6-5H10V0H6Z" fill="#c00" /></>)}</Ic>
        <Ic>{black(<><path d="M2-9H9V-2H2ZM-9 1H-2V8H-9Z" fill="#901010" /><path d="M-9-6H-3M9 4H3" stroke="#000" strokeWidth="2" /><path d="M-4-10V-2L0-6ZM4 0V8L0 4Z" fill="#000" /></>)}</Ic>
      </div>
      <div className="flex h-8">
        <div className={`${bar} w-[428px]`}>
          <Grip />
          <Ic><Gate x={-7} y={-7} /><Gate x={-7} y={2} /><Transistor x={2} y={-8} /><Transistor x={2} y={1} /></Ic>
          <Ic><Box x={-8} y={-5} w={17} h={14} f="#eee" s="#666" /><path d="M-8-4H9" stroke="#777" strokeWidth="2" /><Gate x={-3} y={-10} /><Box x={-3} y={-1} w={8} h={8} f="#8be07b" s="#1c6b1c" /><path d="M-5 3H7" stroke="#c33" strokeWidth="1.400" /></Ic>
          <Ic w="w-[33px]"><circle cx="0" cy="-7" r="2.500" fill="#fc7" stroke="#a65d16" /><path d="M0-4V2" stroke="#a65d16" strokeWidth="2" /><path d="M-7 2H7V9H-7Z" fill="#ffd17b" stroke="#bb731f" /><path d="M-3 4H3L0 7Z" fill="#553b19" /></Ic>
          <Ic><path d="M-6 0L2-2L10 7L1 11Z" fill="#889" stroke="#223" /><path d="M-2 2L4 9" stroke="#ddd" strokeWidth="2" /><path d="M-11 2L-4-4" stroke="#332" strokeWidth="3" /><circle cx="-1" cy="-5" r="5" fill="#a9d0e2" stroke="#69a" /><circle cx="7" cy="-1" r="3.500" fill="#448" /></Ic>
          <Ic><g transform="rotate(-45)" fill="none" stroke="#777" strokeWidth="3.600"><rect x="-10" y="-4" width="11" height="7" rx="3" /><rect x="-1" y="-3" width="11" height="7" rx="3" /></g><g transform="rotate(-45)" fill="none" stroke="#ccc" strokeWidth="1.500"><rect x="-10" y="-4" width="11" height="7" rx="3" /><rect x="-1" y="-3" width="11" height="7" rx="3" /></g></Ic>
          <Ic><path d="M-8-1H7V9H-8Z" fill="#f5f5f5" stroke="#777" /><path d="M-8-1L0 6L9-3" fill="none" stroke="#777" /><path d="M-8-3Q-2-9 4-3M5-8V-1H-1" fill="none" stroke="#4c80ae" strokeWidth="2" /></Ic>
          <Ic><Box x={-10} y={-10} w={13} h={9} f="#cbd5e9" s="#345" /><Gate x={-7} y={-8} /><path d="M-6 0V4H5V-6M-2 5V8H8V-2" fill="none" stroke="#6480a8" /><Transistor x={1} y={1} /></Ic>
          <Ic><path d="M-3-10H9L3 0Z" fill="#efb1b1" stroke="#b53f3f" /><path d="M3-8V-3" stroke="#b22" strokeWidth="2" /><Transistor x={-8} y={0} /></Ic>
          <Ic><Box x={-9} y={-9} w={13} h={12} f="#ddd" s="#666" /><path d="M-6-6H-2V-1H-6ZM0-6V0M0-3H3" fill="none" stroke="#555" /><Transistor x={1} y={1} /></Ic>
          <Ic><path d="M-10-3H0" stroke="#222" /><path d="M-8-6H-5Q-2-5-2-3T-5 0H-8Z" fill="#7ba2ff" stroke="#124" /><Box x={3} y={-7} w={7} h={8} f="#dd3" s="#161" sw={2} /><path d="M6.500-8V2" stroke="#c00" strokeWidth="2" /><rect x="-11" y="3" width="11" height="8" fill="#0f0" /><text x="-10.500" y="10" fontSize="7.500" fontWeight="bold" fill="#033" letterSpacing="0">l=3</text><text x="2" y="10" fontSize="7.500" fontWeight="bold" fill="#222" letterSpacing="0">l=3</text></Ic>
          <Ic w="w-[31px]"><Gate x={-7} y={-9} /><Gate x={-7} y={3} /><Transistor x={2} y={-4} /><path d="M8-7H2M4-9L2-7L4-5" stroke="#282" fill="none" strokeWidth="1.500" /><path d="M8 7H2M4 5L2 7L4 9" stroke="#b22" fill="none" strokeWidth="1.500" /></Ic>
          <Ic w="w-[33px]"><path d="M-6 5L-4 0L-7-6L-3-3L0-7L3-3L7-6L4 0L6 5L2 3L0 5L-2 3Z" fill="#ff932d" stroke="#e02b14" /><path d="M-2 2L0-3L2 2Z" fill="#fff06d" /><path d="M-7 6.500H7" stroke="#a55" /></Ic>
          <div className="flex-1" />
          <More w="w-[17px]" />
        </div>
        <div className={`${bar} flex-1`}>
          <Grip w="w-[11px]" />
          <Ic w="w-[31px]">{[-8, -2, 4].map((y) => [-9, -3, 3].map((x) => <Box key={`${x},${y}`} x={x} y={y} w={6} h={4} f="#999" s="#505050" />))}</Ic>
          <Ic>{[-10, -5, -1, 3, 7].map((y, r) => (r === 0 || r === 4 ? [-6, 2] : [-8, -3, 2]).map((x) => <Box key={`${x},${y}`} x={x} y={y} w={5} h={4} f="#999" s="#505050" />))}</Ic>
        </div>
      </div>
      <div className="h-5 flex items-center pt-px bg-gradient-to-b from-[#e6e6e6] to-[#c8c8c8] border-b-2 border-[#888] whitespace-nowrap tracking-[-0.05px]">
        <Grip w="w-[11px]" h="h-[6px]" />
        <span className="w-[482px] pl-[2px]">mouse L: mouseSingleSelectPt() _leiLMBPress()</span>
        <span className="flex-1 pl-[2px]">M: hiZoomAbsoluteScale(hiGetCurrentWindow() 0.9)</span>
        <span className="pr-[10px]">R: _lxHiMousePopUp()</span>
      </div>
      <div className="h-[21px] flex items-stretch bg-[#f0f0f0]">
        <div className="w-[44px] bg-[#f8d8d8] border-r border-[#444] flex items-center pt-px pl-px">16(26)</div>
        <span className="flex-1 pl-[9px] pt-px flex items-center">&gt;</span>
        <div className="w-[51px] border-l border-[#777] flex items-center pt-px pl-[6px]">Cmd:<div className="ml-[7px] w-3 h-3 bg-[#999]" /></div>
      </div>
      <div className="h-[3px] bg-black" />
    </div>
  );
}

export default function App() {
  return (
    <div className="w-[1278px] h-[720px] overflow-hidden flex flex-col bg-[#efefef] font-['Liberation_Sans',Arial,sans-serif] text-[12.5px] leading-[15px] tracking-[0.05px] text-[#3c3c3c]">
      <MenuBar />
      <TopBars />
      <div className="flex flex-1 min-h-0 overflow-hidden">
        <Side />
        <div className="w-[7px] bg-[#d3d3da] border-r border-[#999] shrink-0" />
        <div className="flex-1 bg-white pl-1 pt-[3px] pb-1 border-b border-[#222]">
          <div className="h-[2px] bg-[#d30000] mr-[3px]" />
          <Layout />
        </div>
      </div>
      <BottomBars />
    </div>
  );
}
